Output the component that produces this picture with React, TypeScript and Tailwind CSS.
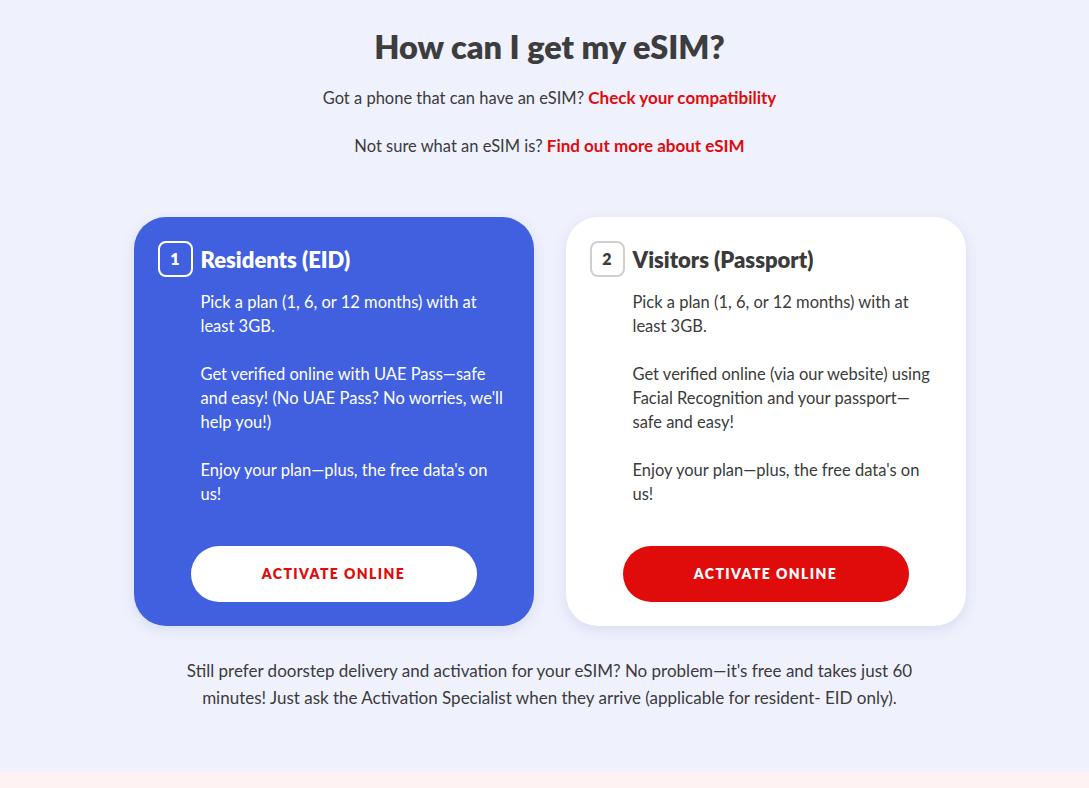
import React from "react"

const steps = [
    {
        n: "1",
        title: "Residents (EID)",
        paras: [
            "Pick a plan (1, 6, or 12 months) with at least 3GB.",
            "Get verified online with UAE Pass—safe and easy! (No UAE Pass? No worries, we'll help you!)",
            "Enjoy your plan—plus, the free data's on us!",
        ],
        primary: true,
    },
    {
        n: "2",
        title: "Visitors (Passport)",
        paras: [
            "Pick a plan (1, 6, or 12 months) with at least 3GB.",
            "Get verified online (via our website) using Facial Recognition and your passport—safe and easy!",
            "Enjoy your plan—plus, the free data's on us!",
        ],
        primary: false,
    },
]

const StepCard = ({ step }) => {
    const blue = step.primary
    return (
        <div
            className={`flex w-[400px] flex-col rounded-[32px] pb-6 pl-6 pr-7 pt-6 shadow-[0_4px_14px_rgba(60,70,140,0.12)] ${
                blue ? "bg-[#4060e0] text-white" : "bg-white text-[#3b3b3b]"
            }`}
        >
            <div className="flex items-center gap-2">
                <span
                    className={`flex h-9 w-[35px] items-center justify-center rounded-lg border-2 text-[16px] font-extrabold ${
                        blue ? "border-white" : "border-[#cfcfcf]"
                    }`}
                >
                    {step.n}
                </span>
                <h2 className="text-[22px] font-extrabold">{step.title}</h2>
            </div>
            <div className="mt-[13px] flex flex-col gap-6 pl-[43px] text-[16.5px] leading-6">
                {step.paras.map((p, i) => (
                    <p key={i}>{p}</p>
                ))}
            </div>
            <button
                className={`ml-[33px] mt-10 h-14 w-[286px] rounded-full pb-[2px] text-[14px] font-extrabold tracking-[0.1em] ${
                    blue ? "bg-white text-[#e00b0b]" : "bg-[#e00b0b] text-white"
                }`}
            >
                ACTIVATE ONLINE
            </button>
        </div>
    )
}

const App = () => {
    return (
        <div className="min-h-[788px] bg-[#eff1fd] font-['Lato',sans-serif] text-[#3b3b3b]">
            <section className="flex flex-col items-center pb-[61px] pl-[10px] pt-[23px]">
                <h1 className="text-[32.5px] font-extrabold leading-[48px] text-[#3d3d3d]">How can I get my eSIM?</h1>
                <p className="mt-[15px] text-[16.5px] leading-6">
                    Got a phone that can have an eSIM?{" "}
                    <a className="text-[17px] font-bold text-[#e00b0b]" href="#">
                        Check your compatibility
                    </a>
                </p>
                <p className="mt-6 text-[16.5px] leading-6">
                    Not sure what an eSIM is?{" "}
                    <a className="text-[17px] font-bold text-[#e00b0b]" href="#">
                        Find out more about eSIM
                    </a>
                </p>
                <div className="mt-[59px] flex gap-8">
                    {steps.map((s) => (
                        <StepCard key={s.n} step={s} />
                    ))}
                </div>
                <p className="mt-[31px] max-w-[750px] text-center text-[17px] leading-[27px]">
                    Still prefer doorstep delivery and activation for your eSIM? No problem—it's free and takes just
                    60 minutes! Just ask the Activation Specialist when they arrive (applicable for resident- EID only).
                </p>
            </section>
            <div className="h-[17px] bg-[#fff2f2]"></div>
        </div>
    )
}

export default App
